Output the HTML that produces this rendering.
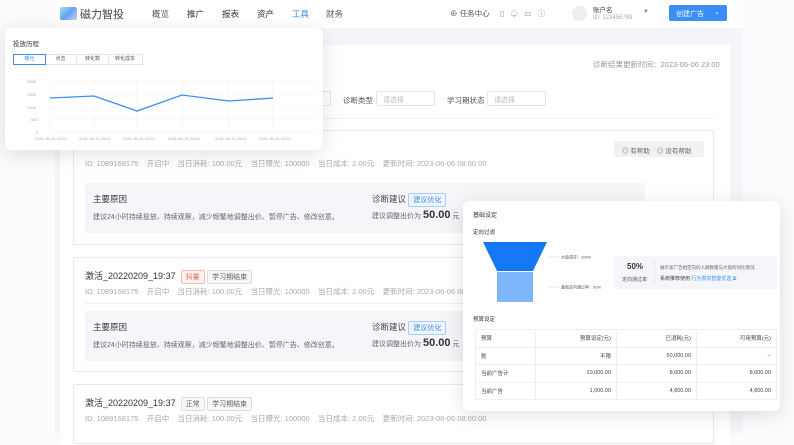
<!DOCTYPE html><html><head><meta charset="utf-8"><style>
*{box-sizing:border-box;margin:0;padding:0}
body{width:794px;height:433px;overflow:hidden;background:#fbfbfd;font-family:"Liberation Sans","Noto Sans CJK SC",sans-serif;color:#333;position:relative}
.abs{position:absolute}
.app{left:55px;top:0;width:688px;height:433px;background:#f4f5f8}
.nav{left:55px;top:0;width:688px;height:28px;background:#fff}
.panel{left:60px;top:45px;width:670px;height:400px;background:#fff}
.t{position:absolute;white-space:nowrap}
.card{position:absolute;left:73px;width:641px;border:1px solid #e8e9ec;background:#fff;border-radius:2px}
.meta{font-size:7.5px;color:#aaa}
.box{position:absolute;left:11px;width:560px;height:50px;background:#f5f6f9}
.tag{display:inline-block;border:1px solid #ddd;background:#f7f7f7;font-size:7px;color:#666;padding:1px 4px;border-radius:2px}
.pop{position:absolute;background:#fff;border-radius:6px;box-shadow:0 4px 20px rgba(0,0,0,.12)}
.inp{position:absolute;height:15px;border:1px solid #e4e4e4;border-radius:2px;font-size:7px;color:#bbb;padding:3px 6px}
table{border-collapse:collapse;font-size:5.5px;color:#444}
td{border:1px solid #eee;height:17.5px;padding:0 5px;text-align:right}
td:first-child{text-align:left}
</style></head><body>
<div class="abs app"></div>
<div class="abs nav"></div>
<div class="abs" style="left:60px;top:7px;width:17px;height:13px;background:linear-gradient(135deg,#9be7e7,#6aa0f5,#c8d4ff);border-radius:2px"></div>
<div class="t" style="left:80px;top:6px;font-size:11px;color:#444">磁力智投</div>
<div class="t" style="left:152px;top:8px;font-size:8.5px;color:#555">概览</div>
<div class="t" style="left:187px;top:8px;font-size:8.5px;color:#333">推广</div>
<div class="t" style="left:222px;top:8px;font-size:8.5px;color:#333">报表</div>
<div class="t" style="left:257px;top:8px;font-size:8.5px;color:#333">资产</div>
<div class="t" style="left:292px;top:8px;font-size:8.5px;color:#3a8ef6">工具</div>
<div class="t" style="left:326px;top:8px;font-size:8.5px;color:#555">财务</div>
<div class="t" style="left:450px;top:8px;font-size:7.5px;color:#555">⊕ 任务中心</div>
<div class="t" style="left:500px;top:8px;font-size:7.5px;color:#888">▯ &nbsp; ♤ &nbsp; ▭ &nbsp; ⓘ</div>
<div class="abs" style="left:572px;top:6px;width:15px;height:15px;border-radius:50%;background:#eee"></div>
<div class="t" style="left:593px;top:4px;font-size:6.5px;color:#444">账户名</div>
<div class="t" style="left:593px;top:15px;font-size:6px;color:#aaa">ID: 123456789</div>
<div class="t" style="left:643px;top:9px;font-size:6px;color:#888">▼</div>
<div class="abs" style="left:669px;top:5px;width:58px;height:16px;background:#3a8ef6;border-radius:2px"></div>
<div class="t" style="left:676px;top:9px;font-size:7px;color:#fff">创建广告</div>
<div class="t" style="left:714px;top:8px;font-size:7px;color:#fff">⌄</div>
<div class="abs panel"></div>
<div class="t" style="left:593px;top:59px;font-size:7.5px;color:#999">诊断结果更新时间：2023-06-06 23:00</div>
<div class="abs" style="left:320px;top:91px;width:11px;height:15px;border:1px solid #e4e4e4;border-left:none"></div>
<div class="t" style="left:343px;top:95px;font-size:7.5px;color:#555">诊断类型</div>
<div class="inp" style="left:376px;top:91px;width:59px">请选择</div>
<div class="t" style="left:447px;top:95px;font-size:7.5px;color:#555">学习期状态</div>
<div class="inp" style="left:487px;top:91px;width:59px">请选择</div>
<div class="abs" style="left:73px;top:118px;width:641px;height:1px;background:#f0f0f0"></div>

<div class="card" style="top:130px;height:115px">
<div class="t" style="left:540px;top:10px;width:90px;height:16px;background:#f0f1f3;border-radius:2px;font-size:6.5px;color:#666;padding:4px 8px">◎ 有帮助 &nbsp;&nbsp; ◎ 没有帮助</div>
<div class="t meta" style="left:11px;top:27px">ID: 1089168175 &nbsp;&nbsp; 开启中 &nbsp;&nbsp; 当日消耗: 100.00元 &nbsp;&nbsp; 当日曝光: 100000 &nbsp;&nbsp; 当日成本: 2.00元 &nbsp;&nbsp; 更新时间: 2023-06-06 08:00:00</div>
<div class="box" style="top:52px">
<div class="t" style="left:8px;top:10px;font-size:8.5px;color:#333">主要原因</div>
<div class="t" style="left:8px;top:29px;font-size:7px;color:#666">建议24小时持续投放、持续观察，减少频繁地调整出价、暂停广告、修改创意。</div>
<div class="t" style="left:287px;top:10px;font-size:8.5px;color:#444">诊断建议 <span class="tag" style="color:#3a8ef6;border-color:#a9cdfa;background:#eef5ff">建议优化</span></div>
<div class="t" style="left:287px;top:26px;font-size:7px;color:#666">建议调整出价为 <b style="font-size:11px;color:#333">50.00</b> 元</div>
</div></div>

<div class="card" style="top:257px;height:115px">
<div class="t" style="left:11px;top:11px;font-size:9px;color:#333">激活_20220209_19:37 &nbsp;<span class="tag" style="color:#e8604c;border-color:#f5b9ae;background:#fff3f0">抖量</span> <span class="tag">学习期结束</span></div>
<div class="t meta" style="left:11px;top:28px">ID: 1089168175 &nbsp;&nbsp; 开启中 &nbsp;&nbsp; 当日消耗: 100.00元 &nbsp;&nbsp; 当日曝光: 100000 &nbsp;&nbsp; 当日成本: 2.00元 &nbsp;&nbsp; 更新时间: 2023-06-06 08:00:00</div>
<div class="abs" style="left:11px;top:45px;width:560px;height:1px;background:#f0f0f0"></div>
<div class="box" style="top:53px">
<div class="t" style="left:8px;top:10px;font-size:8.5px;color:#333">主要原因</div>
<div class="t" style="left:8px;top:29px;font-size:7px;color:#666">建议24小时持续投放、持续观察，减少频繁地调整出价、暂停广告、修改创意。</div>
<div class="t" style="left:287px;top:10px;font-size:8.5px;color:#444">诊断建议 <span class="tag" style="color:#3a8ef6;border-color:#a9cdfa;background:#eef5ff">建议优化</span></div>
<div class="t" style="left:287px;top:26px;font-size:7px;color:#666">建议调整出价为 <b style="font-size:11px;color:#333">50.00</b> 元</div>
</div></div>

<div class="card" style="top:384px;height:60px">
<div class="t" style="left:11px;top:11px;font-size:9px;color:#333">激活_20220209_19:37 &nbsp;<span class="tag">正常</span> <span class="tag">学习期结束</span></div>
<div class="t meta" style="left:11px;top:28px">ID: 1089168175 &nbsp;&nbsp; 开启中 &nbsp;&nbsp; 当日消耗: 100.00元 &nbsp;&nbsp; 当日曝光: 100000 &nbsp;&nbsp; 当日成本: 2.00元 &nbsp;&nbsp; 更新时间: 2023-06-06 08:00:00</div>
</div>

<div class="pop" style="left:5px;top:28px;width:318px;height:122px">
<div class="t" style="left:8px;top:10px;font-size:6.5px;color:#333">投放历程</div>
<div class="abs" style="left:8px;top:26px;width:130px;height:11px;border:1px solid #e4e4e4;font-size:5px;color:#555;display:flex">
<div style="width:33px;border:1px solid #3a8ef6;color:#3a8ef6;text-align:center;line-height:9px;margin:-1px">曝光</div>
<div style="width:32px;border-right:1px solid #e4e4e4;text-align:center;line-height:9px">点击</div>
<div style="width:32px;border-right:1px solid #e4e4e4;text-align:center;line-height:9px">转化数</div>
<div style="width:32px;text-align:center;line-height:9px">转化成本</div></div>
<svg class="abs" style="left:0;top:0" width="318" height="122">
<g stroke="#f0f0f0" stroke-width="0.6">
<line x1="45" y1="53" x2="312" y2="53"/><line x1="45" y1="66" x2="312" y2="66"/><line x1="45" y1="79" x2="312" y2="79"/><line x1="45" y1="91" x2="312" y2="91"/><line x1="45" y1="104" x2="312" y2="104"/>
<line x1="45" y1="50" x2="45" y2="104"/><line x1="89" y1="50" x2="89" y2="104"/><line x1="132" y1="50" x2="132" y2="104"/><line x1="177" y1="50" x2="177" y2="104"/><line x1="224" y1="50" x2="224" y2="104"/><line x1="268" y1="50" x2="268" y2="104"/></g>
<polyline points="45,70 89,68 132,83 177,67 224,73 268,70" fill="none" stroke="#3a8ef6" stroke-width="1.3"/>
<g font-size="4" fill="#aaa" font-family="Liberation Sans"><text x="22" y="55">2000</text><text x="22" y="68">1500</text><text x="22" y="81">1000</text><text x="26" y="93">500</text><text x="31" y="106">0</text>
<text x="30" y="112">2021-06-15 23:00</text><text x="74" y="112">2021-06-15 23:00</text><text x="118" y="112">2021-06-15 23:00</text><text x="163" y="112">2021-06-15 23:00</text><text x="210" y="112">2021-06-15 23:00</text><text x="254" y="112">2021-06-15 23:00</text></g>
</svg></div>

<div class="pop" style="left:463px;top:201px;width:317px;height:210px">
<div class="t" style="left:10px;top:9px;font-size:6px;color:#333">基础设定</div>
<div class="t" style="left:10px;top:27px;font-size:5.5px;color:#333">定向过滤</div>
<svg class="abs" style="left:0;top:0" width="317" height="110">
<polygon points="20,41 84,41 70,70 34,70" fill="#1677f5"/>
<rect x="34" y="71" width="36" height="30" fill="#7fb6fb"/>
<line x1="86" y1="56" x2="96" y2="56" stroke="#ccc" stroke-width=".5"/>
<line x1="86" y1="86" x2="96" y2="86" stroke="#ccc" stroke-width=".5"/>
<text x="98" y="57.5" font-size="4" fill="#555">大盘请求：100%</text>
<text x="98" y="87.5" font-size="4" fill="#555">基础定向通过率：50%</text>
</svg>
<div class="abs" style="left:151px;top:55px;width:163px;height:33px;background:#f5f6f9;border-radius:2px">
<div class="t" style="left:13px;top:6px;font-size:8px;font-weight:bold;color:#333">50%</div>
<div class="t" style="left:8px;top:20px;font-size:5px;color:#555">定向通过率</div>
<div class="abs" style="left:40px;top:5px;width:1px;height:22px;border-left:1px dashed #ddd"></div>
<div class="t" style="left:46px;top:9px;font-size:4.5px;color:#666">展示该广告相定向的人群数量与大盘的对比情况</div>
<div class="t" style="left:46px;top:19px;font-size:5px;color:#444">系统推荐使用 <span style="color:#3a8ef6">行为意向智能优选 ⧉</span></div>
</div>
<div class="t" style="left:10px;top:114px;font-size:5.5px;color:#333">预算设定</div>
<table class="abs" style="left:12px;top:128px;width:302px">
<tr><td style="width:60px">预算</td><td style="width:81px">预算设定(元)</td><td style="width:80px">已消耗(元)</td><td>可用预算(元)</td></tr>
<tr><td>账</td><td>不限</td><td>50,000.00</td><td>--</td></tr>
<tr><td>当前广告计</td><td>10,000.00</td><td>8,000.00</td><td>8,000.00</td></tr>
<tr><td>当前广告</td><td>1,000.00</td><td>4,800.00</td><td>4,800.00</td></tr>
</table>
</div>
</body></html>
